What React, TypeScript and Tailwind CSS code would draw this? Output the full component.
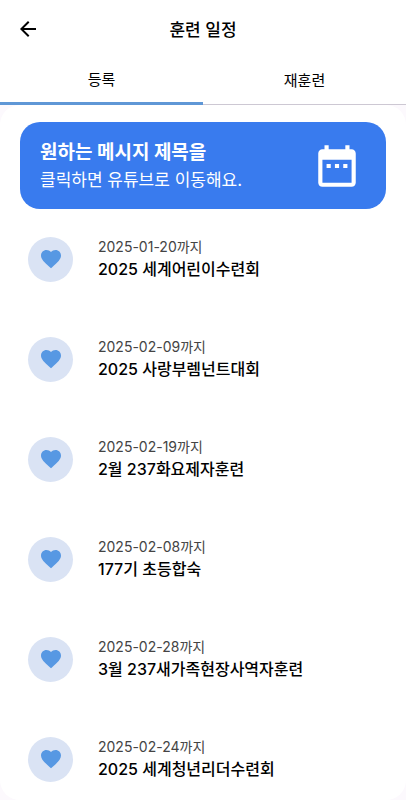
const items = [
  ["2025-01-20까지", "2025 세계어린이수련회"],
  ["2025-02-09까지", "2025 사랑부렘넌트대회"],
  ["2025-02-19까지", "2월 237화요제자훈련"],
  ["2025-02-08까지", "177기 초등합숙"],
  ["2025-02-28까지", "3월 237새가족현장사역자훈련"],
  ["2025-02-24까지", "2025 세계청년리더수련회"],
];

export default function App() {
  return (
    <div className="flex min-h-screen flex-col bg-[#fcf9fd] font-['Inter','Noto_Sans_CJK_KR',sans-serif] text-black">
      <header className="grid h-[58px] grid-cols-[56px_1fr_56px] items-center bg-white">
        <button aria-label="뒤로" className="flex h-14 items-center justify-center">
          <svg viewBox="0 0 24 24" className="size-6" fill="currentColor" aria-hidden="true">
            <path d="M20 11H7.83l5.59-5.59L12 4l-8 8 8 8 1.41-1.41L7.83 13H20v-2z" />
          </svg>
        </button>
        <h1 className="pt-1 text-center text-[17px] font-medium">훈련 일정</h1>
      </header>
      <nav className="grid h-[47px] grid-cols-2 border-b border-[#cdc8d3] bg-white text-[15px]">
        <button className="-mb-px border-b-3 border-[#5f97d6]">등록</button>
        <button>재훈련</button>
      </nav>
      <main className="flex-1 rounded-[20px] bg-white px-5 pt-[17px]">
        <section className="flex h-[87px] items-center justify-between rounded-[20px] bg-[#397bee] pr-6 pl-5 text-white">
          <div>
            <h2 className="text-[19px] leading-7 font-bold">원하는 메시지 제목을</h2>
            <p className="text-[17px] leading-[26px]">클릭하면 유튜브로 이동해요.</p>
          </div>
          <svg viewBox="0 0 24 24" className="size-[50px]" fill="currentColor" aria-hidden="true">
            <path d="M9 11H7v2h2v-2zm4 0h-2v2h2v-2zm4 0h-2v2h2v-2zm2-7h-1V2h-2v2H8V2H6v2H5c-1.11 0-2 .9-2 2v14c0 1.1.89 2 2 2h14c1.1 0 2-.9 2-2V6c0-1.1-.9-2-2-2zm0 16H5V9h14v11z" />
          </svg>
        </section>
        <ul className="-mb-3">
          {items.map(([date, title]) => (
            <li key={title} className="flex h-[100px] items-center gap-[25px] pl-2">
              <span className="flex size-[45px] items-center justify-center rounded-full bg-[#dae3f4]">
                <svg viewBox="0 0 24 24" className="size-6 text-[#5798e3]" fill="currentColor" aria-hidden="true">
                  <path d="M12 21.35l-1.45-1.32C5.4 15.36 2 12.28 2 8.5 2 5.42 4.42 3 7.5 3c1.74 0 3.41.81 4.5 2.09C13.09 3.81 14.76 3 16.5 3 19.58 3 22 5.42 22 8.5c0 3.78-3.4 6.86-8.55 11.54L12 21.35z" />
                </svg>
              </span>
              <div>
                <p className="text-sm leading-5 text-[#444]">{date}</p>
                <p className="text-base leading-6 font-medium">{title}</p>
              </div>
            </li>
          ))}
        </ul>
      </main>
    </div>
  );
}
